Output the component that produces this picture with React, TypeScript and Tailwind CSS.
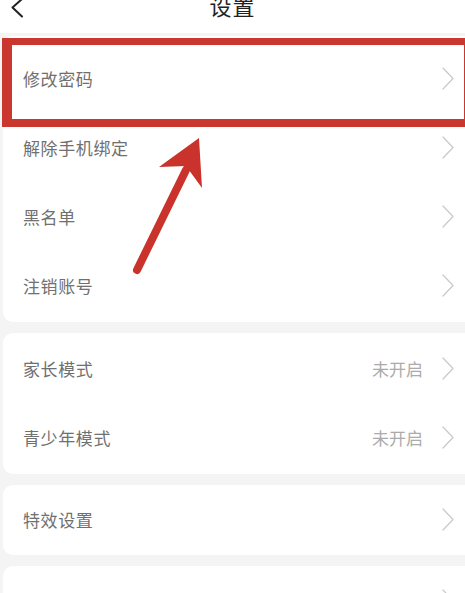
import React from "react";

type Row = {
  label: string;
  value?: string;
};

const groups: Array<{ rows: Row[]; pad: string }> = [
  {
    pad: "pt-[8px] pb-[2px]",
    rows: [
      { label: "修改密码" },
      { label: "解除手机绑定" },
      { label: "黑名单" },
      { label: "注销账号" },
    ],
  },
  {
    pad: "pt-[1px] pb-[2px]",
    rows: [
      { label: "家长模式", value: "未开启" },
      { label: "青少年模式", value: "未开启" },
    ],
  },
  { pad: "pt-0 pb-[1px]", rows: [{ label: "特效设置" }] },
  { pad: "pt-0", rows: [{ label: "播放设置" }] },
];

const Chevron = () => (
  <svg width="12" height="23" viewBox="0 0 12 23" fill="none">
    <polyline
      points="1,1 11,11.5 1,22"
      stroke="#c9c9c9"
      strokeWidth="1.2"
      strokeLinecap="round"
      strokeLinejoin="round"
    />
  </svg>
);

const SettingRow = ({ row }: { row: Row }) => (
  <div className="flex h-[69px] items-center justify-between pl-[20px] pr-[21px]">
    <span className="text-[17px] tracking-[0.6px] text-[#707070]">{row.label}</span>
    <div className="flex items-center gap-[19px]">
      {row.value && (
        <span className="text-[17px] text-[#ababab]">{row.value}</span>
      )}
      <Chevron />
    </div>
  </div>
);

export default function App() {
  return (
    <div
      className="relative h-[593px] w-[465px] overflow-hidden bg-[#f4f4f4]"
      style={{ fontFamily: '"Noto Sans CJK SC", "Noto Sans", sans-serif' }}
    >
      {/* header */}
      <div className="grid h-[33px] grid-cols-[1fr_auto_1fr] bg-white">
        <div className="pl-[10px] -mt-[2px]">
          <svg width="14" height="20" viewBox="0 0 14 20" fill="none">
            <polyline
              points="12,1 2.5,9.5 12,18.5"
              stroke="#222"
              strokeWidth="2"
              strokeLinecap="round"
              strokeLinejoin="round"
            />
          </svg>
        </div>
        <h1 className="-mt-[6px] text-[22px] leading-[22px] tracking-[1px] text-[#222]">设置</h1>
        <div />
      </div>

      {/* cards */}
      <div className="mt-[3px] flex w-[475px] flex-col gap-[11px] pl-[3px]">
        {groups.map((g, i) => (
          <div key={i} className={`rounded-[10px] bg-white ${g.pad}`}>
            {g.rows.map((r) => (
              <SettingRow key={r.label} row={r} />
            ))}
          </div>
        ))}
      </div>

      {/* red highlight box */}
      <div className="absolute left-[2px] top-[38px] h-[89px] w-[470px] border-b-[8px] border-l-[10px] border-r-[8px] border-t-[7px] border-[#c9372f]" />

      {/* annotation arrow */}
      <svg
        className="absolute left-0 top-0"
        width="465"
        height="593"
        viewBox="0 0 465 593"
        fill="none"
      >
        <line
          x1="137"
          y1="270"
          x2="186"
          y2="170"
          stroke="#c9332c"
          strokeWidth="8"
          strokeLinecap="round"
        />
        <polygon points="199,138 159,167 186,166 202,188" fill="#c9332c" />
      </svg>
    </div>
  );
}
